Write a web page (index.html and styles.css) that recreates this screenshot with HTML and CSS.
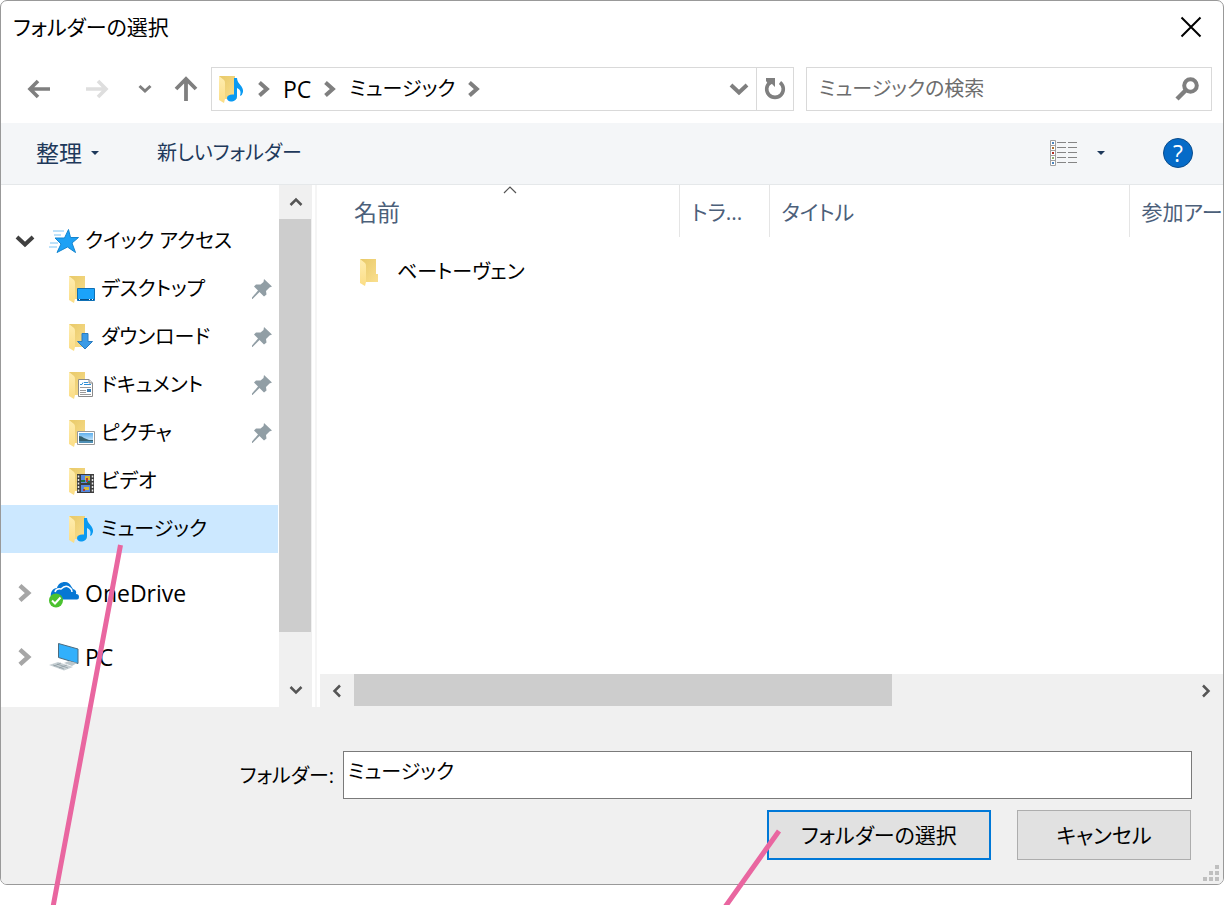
FILE: index.html
```html
<!DOCTYPE html>
<html lang="ja">
<head>
<meta charset="utf-8">
<title>フォルダーの選択</title>
<link rel="stylesheet" href="styles.css">
</head>
<body>
<svg class="defs" aria-hidden="true">
  <defs>
    <linearGradient id="g-back" x1="0" y1="0" x2="1" y2="1"><stop offset="0" stop-color="#e8c968"/><stop offset="1" stop-color="#fadf8f"/></linearGradient>
    <linearGradient id="g-flap" x1="0" y1="0" x2="0" y2="1"><stop offset="0" stop-color="#ffedb0"/><stop offset="1" stop-color="#fbdd85"/></linearGradient>
    <linearGradient id="g-sky" x1="0" y1="0" x2="0" y2="1"><stop offset="0" stop-color="#5fb0ee"/><stop offset="1" stop-color="#e4f3fb"/></linearGradient>
    <symbol id="folder" viewBox="0 0 28 28"><path d="M0 1H16V16H18V24H4z" fill="url(#g-back)"/><path d="M0 1L5 5Q6 6 6 8V24L5 28L0 25z" fill="url(#g-flap)"/></symbol>
    <symbol id="note" viewBox="0 0 28 28"><path d="M15 3H18C18 9 25 11 24 17Q23.500 20 21 21Q23 15 18 13V21C18 25 15 26.500 12 26.500C9.500 26.500 8 25 8 23C8 20.500 11 19 15 19.500z" fill="#0a9af2"/></symbol>
    <symbol id="pin" viewBox="0 0 22 22"><path d="M13 1L21 8.500L18.500 9.500L15 13L15.500 16.500L13 18.500L8.500 14L1.500 21H1V19.500L7 12.500L3 8.500L5 6.500H9.500L12.500 4z" fill="#919ea5"/></symbol>
    <symbol id="chev" viewBox="0 0 12 16"><path d="M1.500 1.500L8.800 8L1.500 14.500" fill="none" stroke="currentColor" stroke-width="4"/></symbol>
    <symbol id="chevdown" viewBox="0 0 20 14"><path d="M2 3L10 10.500L18 3" fill="none" stroke="currentColor" stroke-width="4"/></symbol>
  </defs>
</svg>

<main class="dialog">
  <header class="titlebar">
    <h1 class="title">フォルダーの選択</h1>
    <button class="icon-btn" aria-label="閉じる"><svg width="22" height="22" viewBox="0 0 22 22"><path d="M1.500 1.500L20.500 20.500M20.500 1.500L1.500 20.500" stroke="#000" stroke-width="2"/></svg></button>
  </header>

  <nav class="navbar">
    <button class="icon-btn nav-back" aria-label="戻る"><svg width="24" height="20" viewBox="0 0 24 20"><path d="M23 10H3M11 2L3 10L11 18" fill="none" stroke="#7f7f7f" stroke-width="3.600"/></svg></button>
    <button class="icon-btn nav-forward" aria-label="進む"><svg width="24" height="20" viewBox="0 0 24 20"><path d="M1 10H21M13 2L21 10L13 18" fill="none" stroke="#dedede" stroke-width="3.600"/></svg></button>
    <button class="icon-btn nav-recent" aria-label="最近表示した場所"><svg width="14" height="10" viewBox="0 0 14 10"><path d="M1.500 2L7 7L12.500 2" fill="none" stroke="#7f7f7f" stroke-width="3"/></svg></button>
    <button class="icon-btn nav-up" aria-label="上へ"><svg width="24" height="26" viewBox="0 0 24 26"><path d="M12 25V3M2 13L12 3L22 13" fill="none" stroke="#7f7f7f" stroke-width="3.800"/></svg></button>
    <div class="address">
      <svg class="folder-icon" width="28" height="28"><use href="#folder"/><use href="#note"/></svg>
      <svg class="crumb-sep" width="12" height="16"><use href="#chev"/></svg>
      <a class="crumb latin" href="#">PC</a>
      <svg class="crumb-sep" width="12" height="16"><use href="#chev"/></svg>
      <a class="crumb" href="#">ミュージック</a>
      <svg class="crumb-sep" width="12" height="16"><use href="#chev"/></svg>
      <button class="icon-btn address-drop" aria-label="以前の場所"><svg width="20" height="14"><use href="#chevdown"/></svg></button>
      <button class="icon-btn refresh" aria-label="最新の情報に更新"><svg width="22" height="24" viewBox="0 0 22 24"><path d="M16 5.500A8.300 8.300 0 1 1 6 5.500" fill="none" stroke="#7f7f7f" stroke-width="3.600"/><path d="M2 1H11V10L8 7L5 8L2 4z" fill="#7f7f7f"/></svg></button>
    </div>
    <div class="search">
      <input class="search-input" type="text" aria-label="検索" placeholder="ミュージックの検索">
      <button class="icon-btn" aria-label="検索"><svg width="24" height="24" viewBox="0 0 24 24"><circle cx="15.500" cy="8.500" r="6.300" fill="none" stroke="#7f7f7f" stroke-width="4"/><path d="M11 13L2 22" stroke="#7f7f7f" stroke-width="4.500"/></svg></button>
    </div>
  </nav>

  <div class="toolbar">
    <button class="tool"><span class="kanji">整理</span><span class="caret"></span></button>
    <button class="tool">新しいフォルダー</button>
    <button class="tool view" aria-label="表示方法">
      <svg width="28" height="26" viewBox="0 0 28 26"><path d="M.5 .5H5.500V25.500H.5zM.5 5.500H5.500M.5 10.500H5.500M.5 15.500H5.500M.5 20.500H5.500" fill="#fff" stroke="#a0a0a0"/><path d="M7 2.500H16M18 2.500H27M7 7.500H16M18 7.500H27M7 12.500H16M18 12.500H27M7 17.500H16M18 17.500H27M7 22.500H16M18 22.500H27" stroke="#858585"/><path d="M2 2h2v2H2zM2 22h2v2H2z" fill="#4a84bd"/><path d="M2 7h2v2H2z" fill="#b07030"/><path d="M2 12h2v2H2z" fill="#b02a20"/><path d="M2 17h2v2H2z" fill="#8fae70"/></svg>
      <span class="caret"></span>
    </button>
    <button class="help" aria-label="ヘルプ">?</button>
  </div>

  <div class="body">
    <aside class="tree">
      <ul class="tree-list">
        <li class="node">
          <svg class="expander open" width="20" height="14"><use href="#chevdown"/></svg>
          <svg class="root-icon" width="30" height="26" viewBox="0 0 30 26"><path d="M4 3H15M5 7H12M1 15H9M0 19H8" stroke="#7cc4f5" stroke-width="1"/><path d="M19.500 1.500L21.500 9.500H29.500L23 15L26.500 24.500L18.500 19L8 24.500L12 16L6 10H15.500z" fill="#1da1f5" stroke="#1485cf"/></svg>
          クイック アクセス
        </li>
        <li class="node child"><svg class="child-icon" width="28" height="28"><use href="#folder"/><path d="M8.500 13.500H25.500V25.500H8.500z" fill="#1ba3fa" stroke="#0f70b5"/><path d="M9 24.500H25" stroke="#07508a"/><path d="M10 24.500H11M20 24.500H21M23 24.500H24" stroke="#fff"/></svg>デスクトップ<svg class="pin" width="22" height="22"><use href="#pin"/></svg></li>
        <li class="node child"><svg class="child-icon" width="28" height="28"><use href="#folder"/><path d="M13 10.500H19V18.500H23.500L16 26L8.500 18.500H13z" fill="#3c9be6" stroke="#2a7cc0"/></svg>ダウンロード<svg class="pin" width="22" height="22"><use href="#pin"/></svg></li>
        <li class="node child"><svg class="child-icon" width="28" height="28"><use href="#folder"/><path d="M9.500 8.500H20L23.500 12V25.500H9.500z" fill="#fff" stroke="#8a8a8a"/><path d="M20 8.500V12H23.500" fill="#ddd" stroke="#8a8a8a"/><path d="M11 13.500H13L14 11.500M15 11.500H19M15 13.500H22" stroke="#2f8fd6" fill="none"/><path d="M11 16.500H22M11 19.500H17M11 21.500H17M11 23.500H22" stroke="#9a9a9a"/><path d="M18 18h4v3h-4z" fill="#3a7fb8"/></svg>ドキュメント<svg class="pin" width="22" height="22"><use href="#pin"/></svg></li>
        <li class="node child"><svg class="child-icon" width="28" height="28"><use href="#folder"/><path d="M8.500 12.500H25.500V25.500H8.500z" fill="#fff" stroke="#999"/><path d="M10 14H24V24H10z" fill="url(#g-sky)"/><path d="M10 17Q13 17 15 19L20 21L24 21V24H10z" fill="#35606d"/><path d="M10 22H24V24H10z" fill="#4f8fb5"/></svg>ピクチャ<svg class="pin" width="22" height="22"><use href="#pin"/></svg></li>
        <li class="node child"><svg class="child-icon" width="28" height="28"><use href="#folder"/><path d="M8 7H25V26H8z" fill="#3d3d3d"/><path d="M12 8H21V16H12zM12 18H21V25H12z" fill="#5688dc"/><path d="M16 9h5v4h-5zM15 20h5v3h-5z" fill="#d8b934"/><path d="M12 13h4v2h-4zM18 14h3v2h-3z" fill="#24713b"/><path d="M17 11h2v4h-2zM14 22h2v2h-2z" fill="#b13c35"/><path d="M9.500 8.500V26M23.500 8.500V26" stroke="#e6e6e6" stroke-width="1.500" stroke-dasharray="2 1.500"/></svg>ビデオ</li>
        <li class="node child selected"><svg class="child-icon" width="28" height="28"><use href="#folder"/><use href="#note"/></svg>ミュージック</li>
        <li class="node root latin">
          <svg class="expander" width="14" height="18"><use href="#chev"/></svg>
          <svg class="root-icon" width="30" height="30" viewBox="0 -4 30 30"><path d="M2 15C1 10 4 6 8 6C9 2 12 0 16 0C19 0 21 2 22 4L24 7Q28 8 27 12Q30 12 30 15Q30 17.500 28 17.500H9Z" fill="#0677d4"/><path d="M6 10Q7 6 12 7Q17 2 21 6Q23 7 23 10" fill="none" stroke="#fff" stroke-width="1.500"/><circle cx="7" cy="18.500" r="7" fill="#4bc22f"/><path d="M3 18.500L6 21.500L11.500 15.500" fill="none" stroke="#fff" stroke-width="2"/></svg>
          OneDrive
        </li>
        <li class="node root latin">
          <svg class="expander" width="14" height="18"><use href="#chev"/></svg>
          <svg class="root-icon" width="30" height="28" viewBox="0 0 30 28"><path d="M9.500 .5L29 6V20.500L9.500 14.500z" fill="#32b0fc" stroke="#4c6b7e"/><path d="M15 20L20 18L28 20L23 23z" fill="#bcc7cc"/><path d="M0 22L9 19L24 24L15 27.500z" fill="#c7d0d4"/><path d="M4 22L15 26M8 21L19 25M5 23L12 20M10 25L18 22" stroke="#8b9aa1" stroke-width=".7"/></svg>
          PC
        </li>
      </ul>
      <div class="scroll scroll-v">
        <button class="scroll-btn" aria-label="上へスクロール"><svg width="14" height="10" viewBox="0 0 14 10"><path d="M1.500 8L7 2.500L12.500 8" fill="none" stroke="#555" stroke-width="2.500"/></svg></button>
        <div class="track"><div class="thumb" style="height:91%"></div></div>
        <button class="scroll-btn" aria-label="下へスクロール"><svg width="14" height="10" viewBox="0 0 14 10"><path d="M1.500 2L7 7.500L12.500 2" fill="none" stroke="#555" stroke-width="2.500"/></svg></button>
      </div>
    </aside>

    <section class="files">
      <div class="file-area">
        <table class="file-table">
          <colgroup><col class="c-name"><col class="c-track"><col class="c-title"><col></colgroup>
          <thead><tr>
            <th><span class="kanji">名前</span><svg class="sort" width="14" height="8" viewBox="0 0 14 8"><path d="M1 7L7 1L13 7" fill="none" stroke="#555" stroke-width="1.200"/></svg></th>
            <th>トラ...</th><th>タイトル</th><th>参加アーティスト</th>
          </tr></thead>
          <tbody><tr><td colspan="4"><span class="file"><svg width="28" height="28"><use href="#folder"/></svg>ベートーヴェン</span></td></tr></tbody>
        </table>
      </div>
      <div class="scroll scroll-h">
        <button class="scroll-btn" aria-label="左へスクロール"><svg width="10" height="14" viewBox="0 0 10 14"><path d="M8 1.500L2.500 7L8 12.500" fill="none" stroke="#555" stroke-width="2.500"/></svg></button>
        <div class="track"><div class="thumb" style="width:64.4%"></div></div>
        <button class="scroll-btn" aria-label="右へスクロール"><svg width="10" height="14" viewBox="0 0 10 14"><path d="M2 1.500L7.500 7L2 12.500" fill="none" stroke="#555" stroke-width="2.500"/></svg></button>
      </div>
    </section>
  </div>

  <form class="footer">
    <div class="field">
      <label class="field-label" for="folder-name">フォルダー:</label>
      <input class="field-input" id="folder-name" type="text" value="ミュージック">
    </div>
    <div class="actions">
      <button class="btn primary" type="button">フォルダーの選択</button>
      <button class="btn" type="button">キャンセル</button>
    </div>
    <svg class="grip" width="16" height="16" viewBox="0 0 16 16"><path d="M12 0h4v4h-4zM6 6h4v4H6zM12 6h4v4h-4zM0 12h4v4H0zM6 12h4v4H6zM12 12h4v4h-4z" fill="#bfbfbf"/></svg>
  </form>
</main>

<svg class="callouts" width="1224" height="905" viewBox="0 0 1224 905" aria-hidden="true"><path d="M120.500 545L53 907M779 831L725 907" stroke="#e966a0" stroke-width="5" fill="none"/></svg>
</body>
</html>
```

FILE: styles.css
```css
* { box-sizing: border-box; }

body {
  position: relative;
  min-height: 100vh;
  margin: 0;
  overflow: hidden;
  background: #fff;
  color: #000;
  font: 20px/32px "Open Sans", "Noto Sans CJK JP", sans-serif;
  font-feature-settings: "palt";
}

button, input {
  margin: 0;
  font: inherit;
  font-feature-settings: inherit;
  color: inherit;
}

svg { flex: none; display: block; }
.defs { position: absolute; width: 0; height: 0; }
.kanji, .latin { font-size: 23px; }

.dialog {
  overflow: hidden;
  border: 1px solid #999;
  border-radius: 7px;
  background: #fff;
}

.icon-btn {
  display: flex;
  align-items: center;
  justify-content: center;
  padding: 0;
  border: 0;
  background: none;
}

.titlebar {
  display: flex;
  align-items: center;
  justify-content: space-between;
  height: 54px;
  padding: 0 21px 2px 12px;
}
.title { margin: 0; font-size: 21px; font-weight: 400; }

.navbar {
  display: flex;
  height: 68px;
  padding: 12px 11px 12px 0;
}
.nav-back { width: 76px; }
.nav-forward { width: 40px; }
.nav-recent { width: 56px; }
.nav-up { width: 26px; margin-right: 12px; }

.address {
  flex: 1;
  display: flex;
  align-items: center;
  border: 1px solid #d9d9d9;
}
.folder-icon { margin: 0 11px 0 7px; }
.crumb-sep { color: #7f7f7f; }
.crumb { margin: 0 13px; color: #000; text-decoration: none; }
.address-drop { width: 34px; margin-left: auto; color: #7f7f7f; }
.refresh { align-self: stretch; width: 37px; border-left: 1px solid #d9d9d9; }

.search {
  flex: 0 1 406px;
  display: flex;
  align-items: center;
  margin-left: 12px;
  padding: 0 12px;
  border: 1px solid #d9d9d9;
}
.search-input {
  flex: 1;
  min-width: 0;
  padding: 0;
  border: 0;
  outline: 0;
  background: none;
}
.search-input::placeholder { color: #6d6d6d; opacity: 1; }

.toolbar {
  display: flex;
  align-items: center;
  gap: 58px;
  height: 62px;
  padding: 0 30px 2px 35px;
  border-bottom: 1px solid #e5e8ea;
  background: #f4f6f8;
  color: #1e395b;
}
.tool {
  display: flex;
  align-items: center;
  gap: 9px;
  padding: 0;
  border: 0;
  background: none;
}
.caret {
  border: 4px solid transparent;
  border-top-color: #1e395b;
  border-bottom: 0;
}
.view { gap: 19px; margin-left: auto; }
.help {
  width: 30px;
  height: 30px;
  padding: 0;
  border: 1px solid #0a4c8c;
  border-radius: 50%;
  background: #056bc8;
  color: #fff;
  font-size: 23px;
  line-height: 28px;
}

.body { display: flex; }

.tree {
  display: flex;
  flex: 0 0 316px;
  border-right: 2px solid #f5f5f5;
}
.tree-list {
  flex: 1;
  margin: 0;
  padding: 32px 0 26px;
  list-style: none;
}
.node {
  display: flex;
  align-items: center;
  height: 48px;
  margin-right: 1px;
  padding-left: 17px;
}
.child { padding-left: 68px; }
.root { margin-top: 16px; }
.selected { background: #cce8ff; }
.expander { margin-right: 17px; color: #a6a6a6; }
.expander.open { margin: 0 14px 0 -3px; color: #404040; }
.root-icon { margin-right: 6px; }
.child-icon { margin-right: 4px; }
.pin { margin: 0 5px 0 auto; }

.scroll { display: flex; background: #f0f0f0; }
.scroll-v { flex: 0 0 33px; flex-direction: column; margin-right: 3px; }
.scroll-btn {
  flex: 0 0 34px;
  display: flex;
  align-items: center;
  justify-content: center;
  padding: 0;
  border: 0;
  background: none;
}
.track { flex: 1; }
.thumb { background: #cdcdcd; }
.scroll-v .thumb { width: 32px; }
.scroll-h .thumb { height: 32px; }
.scroll-h { flex: 0 0 33px; margin-left: 3px; }

.files {
  flex: 1;
  display: flex;
  flex-direction: column;
  min-width: 0;
}
.file-area { flex: 1; overflow: hidden; }
.file-table {
  width: 1060px;
  table-layout: fixed;
  border-collapse: collapse;
}
.c-name { width: 362px; }
.c-track { width: 90px; }
.c-title { width: 360px; }
.file-table th {
  position: relative;
  height: 52px;
  padding: 2px 0 0 12px;
  border-right: 1px solid #e5e5e5;
  color: #4c607a;
  font-size: 21px;
  font-weight: 400;
  text-align: left;
  white-space: nowrap;
}
.file-table th:first-child { padding-left: 37px; }
.sort { position: absolute; top: 1px; left: 50%; margin-left: 5px; }
.file-table td { padding: 11px 0 0 43px; }
.file { display: flex; align-items: center; gap: 9px; height: 48px; }

.footer {
  position: relative;
  display: flex;
  flex-direction: column;
  gap: 11px;
  padding: 44px 31px 24px;
  background: #f0f0f0;
}
.field { display: flex; }
.field-label {
  flex: 0 0 302px;
  padding: 9px 0 0;
  text-align: right;
}
.field-input {
  flex: 1;
  min-width: 0;
  height: 48px;
  margin-left: 9px;
  padding: 0 4px 9px;
  border: 1px solid #7a7a7a;
  background: #fff;
}
.actions {
  display: flex;
  justify-content: flex-end;
  gap: 26px;
  padding-right: 1px;
}
.btn {
  width: 174px;
  height: 50px;
  padding: 0;
  border: 1px solid #adadad;
  background: #e1e1e1;
  font-size: 21px;
}
.primary { width: 224px; border: 2px solid #0078d7; }
.grip { position: absolute; right: 4px; bottom: 3px; }

.callouts {
  position: absolute;
  top: 0;
  left: 0;
  pointer-events: none;
}
```
